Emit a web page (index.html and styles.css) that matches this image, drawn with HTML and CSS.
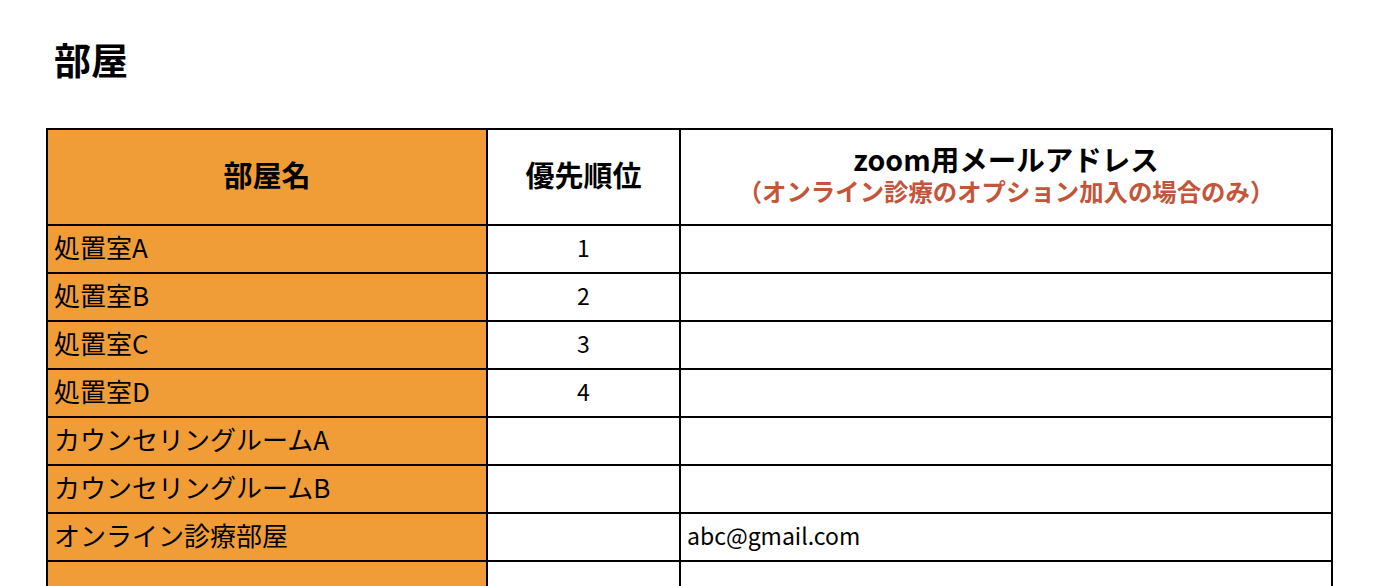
FILE: index.html
```html
<!DOCTYPE html>
<html lang="ja">
<head>
<meta charset="utf-8">
<title>部屋</title>
<link rel="stylesheet" href="styles.css">
</head>
<body>
<main class="page">
  <h1 class="title">部屋</h1>
  <table class="rooms">
    <colgroup>
      <col class="c-name">
      <col class="c-prio">
      <col class="c-mail">
    </colgroup>
    <thead>
      <tr class="head">
        <th class="name">部屋名</th>
        <th>優先順位</th>
        <th><span class="line">zoom用メールアドレス</span><span class="line note">（オンライン診療のオプション加入の場合のみ）</span></th>
      </tr>
    </thead>
    <tbody>
      <tr><td class="name">処置室A</td><td class="num">1</td><td></td></tr>
      <tr><td class="name">処置室B</td><td class="num">2</td><td></td></tr>
      <tr><td class="name">処置室C</td><td class="num">3</td><td></td></tr>
      <tr><td class="name">処置室D</td><td class="num">4</td><td></td></tr>
      <tr><td class="name">カウンセリングルームA</td><td class="num"></td><td></td></tr>
      <tr><td class="name">カウンセリングルームB</td><td class="num"></td><td></td></tr>
      <tr><td class="name">オンライン診療部屋</td><td class="num"></td><td class="mail">abc@gmail.com</td></tr>
      <tr><td class="name"></td><td class="num"></td><td></td></tr>
      <tr><td class="name"></td><td class="num"></td><td></td></tr>
    </tbody>
  </table>
</main>
</body>
</html>
```
FILE: styles.css
```css
html, body {
  margin: 0;
  padding: 0;
  background: #ffffff;
}
body {
  font-family: "Noto Sans CJK JP", "Noto Sans", sans-serif;
  color: #000;
}
.page {
  padding: 37px 44px 0 46px;
}
.title {
  margin: 0;
  padding-left: 8px;
  font-size: 37px;
  line-height: 44px;
  font-weight: 700;
}
.rooms {
  margin-top: 47px;
  width: 1285px;
  table-layout: fixed;
  border-collapse: collapse;
}
.c-name { width: 440px; }
.c-prio { width: 193px; }
.c-mail { width: 652px; }
.rooms th,
.rooms td {
  border: 2px solid #000;
  padding: 0 6px 4px 6px;
  vertical-align: middle;
}
.rooms th {
  font-size: 29px;
  font-weight: 700;
  text-align: center;
  padding-bottom: 6px;
}
.head {
  height: 96px;
}
.rooms tbody tr {
  height: 48px;
}
.rooms td {
  font-size: 26px;
  line-height: 30px;
  font-weight: 400;
}
.rooms td.mail {
  font-size: 23px;
}
.name {
  background: #f09d38;
}
.num {
  text-align: center;
}
.rooms td.num {
  font-size: 23px;
}
.line {
  display: block;
  font-size: 28.5px;
  line-height: 33px;
}
.line.note {
  color: #c4553a;
  font-size: 24.4px;
  line-height: 31px;
}
```
